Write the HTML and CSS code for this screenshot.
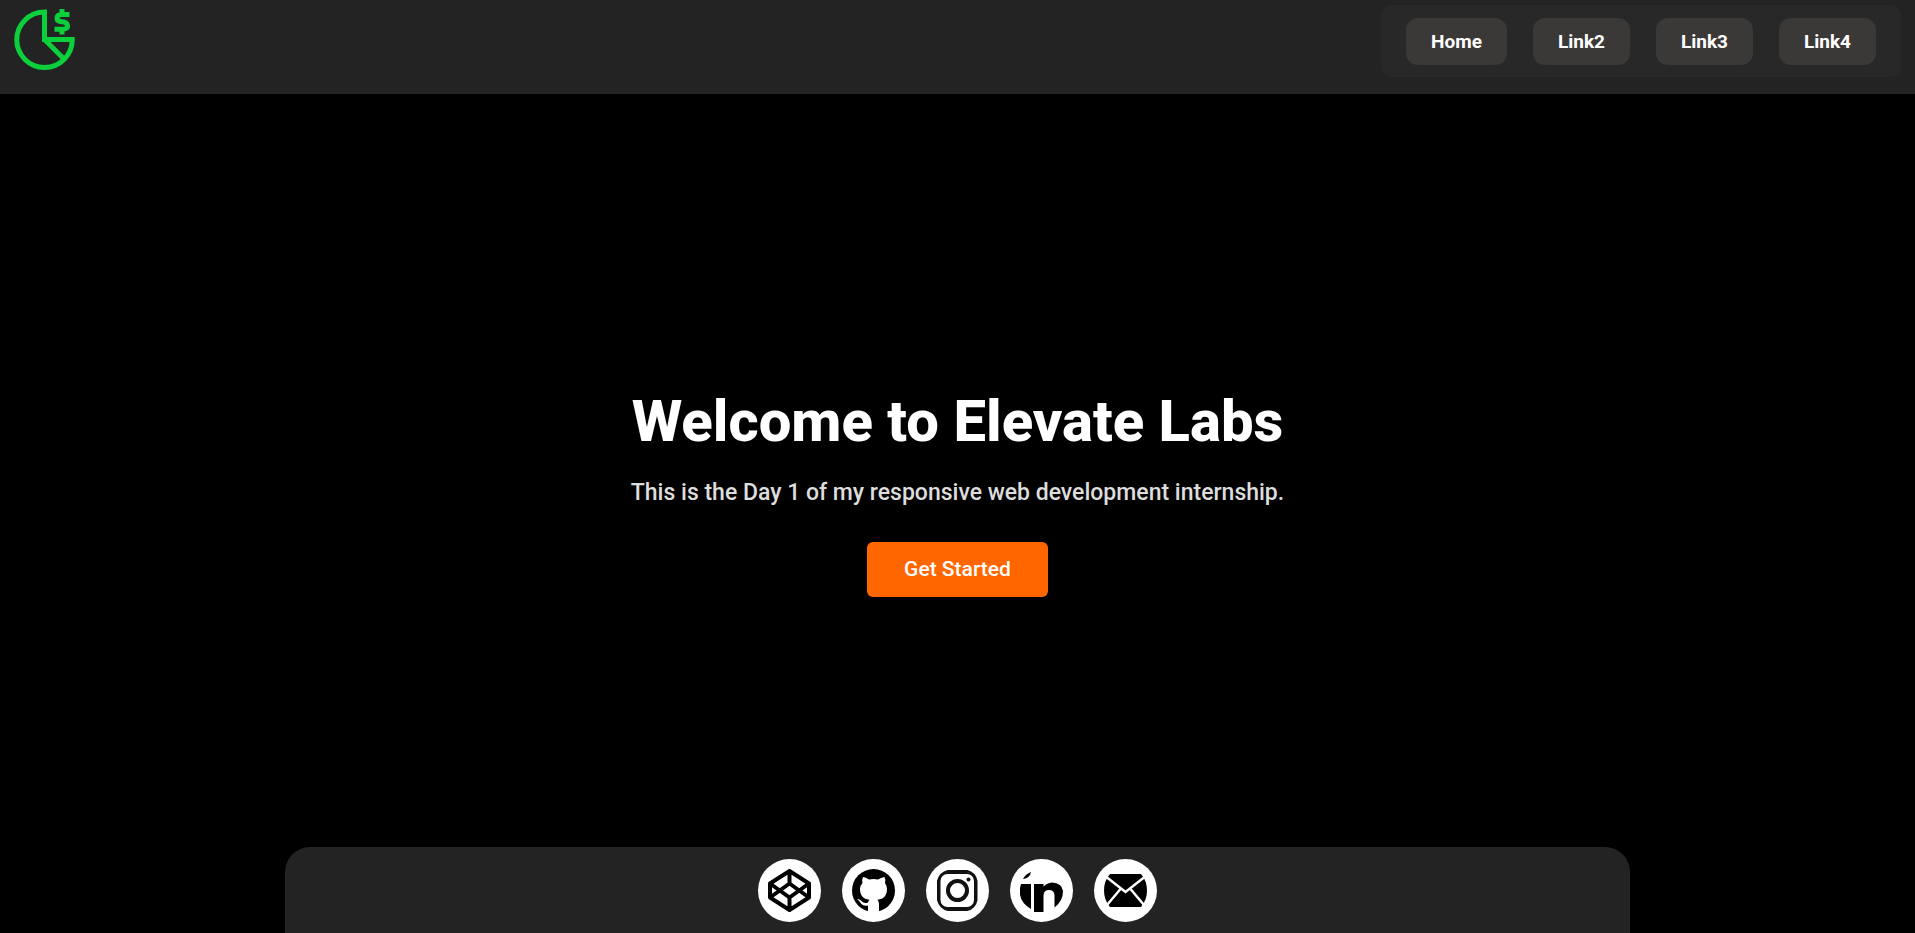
FILE: index.html
```html
<!DOCTYPE html>
<html lang="en">
<head>
<meta charset="utf-8">
<meta name="viewport" content="width=device-width, initial-scale=1">
<title>Elevate Labs</title>
<link rel="stylesheet" href="styles.css">
</head>
<body>
<header class="header">
  <a class="logo" href="#" aria-label="Home page">
    <svg viewBox="0 0 62 62" fill="none" stroke="#0bd03c" stroke-width="5">
      <path d="M30.500 4A27.750 27.750 0 1 0 58.250 31.500H30.500Z"/>
      <path d="M31 32l19.500 19.500"/>
      <path d="M55.500 6.500H48Q43 6.500 43 10T48 13.700T53.500 17.500T48 21.300H40.500M48 1v5M48 21v5.500"/>
    </svg>
  </a>
  <nav class="nav">
    <a class="nav-link" href="#">Home</a>
    <a class="nav-link" href="#">Link2</a>
    <a class="nav-link" href="#">Link3</a>
    <a class="nav-link" href="#">Link4</a>
  </nav>
</header>
<main class="hero">
  <h1 class="title">Welcome to Elevate Labs</h1>
  <p class="subtitle">This is the Day 1 of my responsive web development internship.</p>
  <button class="cta" type="button">Get Started</button>
</main>
<footer class="footer">
  <a class="social" href="#" aria-label="CodePen">
    <svg viewBox="0 0 43 43" fill="none" stroke="#000" stroke-width="4" stroke-linejoin="round"><path d="M21.500 2L41 14.500V28.500L21.500 41L2 28.500V14.500ZM21.500 2V14.500M21.500 41V28.500M2 14.500L21.500 28.500L41 14.500M2 28.500L21.500 14.500L41 28.500"/></svg>
  </a>
  <a class="social" href="#" aria-label="GitHub">
    <svg viewBox="0 0 43 43"><circle cx="21.500" cy="21.500" r="21.500"/><path fill="#fff" d="M16 43V36.500C10 37.500 9 34 7.500 32.500Q6.500 31 5 30.500Q7.500 29.500 9.500 32Q12 35 16 33.500Q16.500 31.500 17.500 30.800C11 30 8 26.500 8 20Q8 16.500 10.500 14Q9.500 11 11 8Q14 8 17 10.500Q21.500 9.500 26 10.500Q30 8 32.500 8Q34 11 33 14Q35 17 35 20C35 26.500 32 30 25.500 30.800Q27 32.500 27 35V43Z"/></svg>
  </a>
  <a class="social" href="#" aria-label="Instagram">
    <svg viewBox="0 0 43 43" fill="none" stroke="#111"><path stroke-width="2" d="M12 2H31Q39 4 40.500 12V31Q39 39 31 41H12Q4 39 2 31V12Q4 4 12 2Z"/><rect x="3.500" y="4" width="35.500" height="35" rx="8" stroke-width="2"/><circle cx="21.500" cy="21.500" r="9.500" stroke-width="4"/><circle cx="32.500" cy="10.500" r="2" fill="#111" stroke="none"/></svg>
  </a>
  <a class="social" href="#" aria-label="LinkedIn">
    <svg viewBox="0 0 43 43"><path d="M3 10Q5.500 5 11 3Q10 9 3 10ZM1 15H11V40Q-4 31 1 15ZM14 15H23.500V17.500Q27 14 32 13.500Q42 14 43 22Q43 32 34.500 38.500V26Q34 21 29 21Q24 21 23.500 26V43H14Z"/></svg>
  </a>
  <a class="social" href="#" aria-label="Email">
    <svg viewBox="0 0 43 43"><path d="M6 5H37Q43 12 43 21.500T37 38H6Q0 31 0 21.500T6 5Z"/><path d="M3 8.500L21.500 23L40 8.500M3 36L16.500 20M40 36L26.500 20" fill="none" stroke="#fff" stroke-width="2.500"/></svg>
  </a>
</footer>
</body>
</html>
```

FILE: styles.css
```css
* { box-sizing: border-box; }

body {
  margin: 0;
  min-height: 100vh;
  display: flex;
  flex-direction: column;
  background: #000;
  color: #fff;
  font-family: "Franklin Gothic Medium", Roboto, Arial, sans-serif;
}

.header {
  display: flex;
  justify-content: space-between;
  align-items: flex-start;
  height: 94px;
  padding: 5px 14px;
  background: #232323;
}

.logo { padding-top: 3px; }
.logo svg { display: block; width: 62px; height: 62px; }

.nav {
  display: flex;
  gap: 26px;
  padding: 13px 25px 12px;
  border-radius: 10px;
  background: #282828;
}

.nav-link {
  padding: 12px 25px;
  border-radius: 12px;
  background: #3b3937;
  color: #fff;
  font-size: 19px;
  font-weight: 700;
  line-height: 23px;
  text-decoration: none;
}

.hero {
  flex: 1;
  display: flex;
  flex-direction: column;
  align-items: center;
  justify-content: center;
  padding-top: 40px;
}

.title {
  margin: 0;
  font-size: 58px;
  font-weight: 800;
  line-height: 72px;
}

.subtitle {
  margin: 21px 0 34px;
  color: #ddd;
  font-size: 23px;
  font-weight: 500;
  line-height: 30px;
}

.cta {
  padding: 15px 37px;
  border: 0;
  border-radius: 6px;
  background: #f60;
  color: #fff;
  font-family: inherit;
  font-size: 21px;
  font-weight: 500;
  line-height: 25px;
}

.footer {
  display: flex;
  justify-content: center;
  gap: 21px;
  width: 70.2%;
  margin: 0 auto;
  padding: 12px 0 11px;
  border-radius: 25px 25px 0 0;
  background: #232323;
}

.social {
  padding: 10px;
  border-radius: 50%;
  background: #fff;
}
.social svg { display: block; width: 43px; height: 43px; }
```
